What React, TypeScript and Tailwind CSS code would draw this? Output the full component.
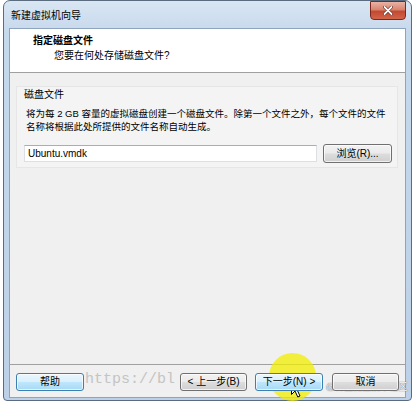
import React from 'react';

const FONT = "font-['Liberation_Sans','Noto_Sans_CJK_SC',sans-serif]";

const grayBtn =
  'border-[#707070] bg-[linear-gradient(#f2f2f2_0%,#ebebeb_48%,#dddddd_52%,#cfcfcf_100%)]';
const blueBtn =
  'border-[#3c7fb1] bg-[linear-gradient(#eaf6fd_0%,#d9f0fc_48%,#bee6fd_52%,#a7d9f5_100%)]';

function WinButton({ label, blue, className }: { label: string; blue?: boolean; className?: string }) {
  return (
    <div
      className={`relative z-10 shrink-0 h-[18px] rounded-[3px] border flex items-center justify-center text-[10px] leading-none text-black shadow-[inset_0_0_0_1px_rgba(255,255,255,0.7)] ${
        blue ? blueBtn : grayBtn
      } ${className ?? ''}`}
    >
      {label}
    </div>
  );
}

export default function App() {
  return (
    <div className={`relative w-[414px] h-[405px] bg-white overflow-hidden ${FONT}`}>
      {/* Window frame */}
      <div className="ml-[3px] w-[409px] h-[401px] rounded-t-[7px] rounded-b-[4px] border border-[#5b6b80] bg-[linear-gradient(180deg,#d9e6f3_0%,#c6d8ec_8%,#bcd0e7_100%)] flex flex-col pl-[5px] pr-[5px] pb-[2px]">
        {/* Title bar */}
        <div className="h-[27px] flex items-start justify-between">
          <span className="pt-[8px] pl-[2px] text-[10px] leading-[13px] text-black">新建虚拟机向导</span>
          <div className="w-[36px] h-[19px] rounded-b-[4px] border border-[#7a2a1c] bg-[linear-gradient(#eab3a4_0%,#d98470_45%,#c24a31_55%,#d2644a_100%)] flex items-center justify-center">
            <svg width="10" height="9" viewBox="0 0 10 9">
              <path d="M1.5 1 L8.5 8 M8.5 1 L1.5 8" stroke="#5a1a10" strokeWidth="3" strokeLinecap="round" />
              <path d="M1.5 1 L8.5 8 M8.5 1 L1.5 8" stroke="#ffffff" strokeWidth="1.8" strokeLinecap="round" />
            </svg>
          </div>
        </div>

        {/* Client area */}
        <div className="flex-1 border border-[#8ea3bd] bg-[#f0f0f0] flex flex-col">
          {/* Header */}
          <div className="h-[44px] bg-white border-b border-[#a0a0a0] pt-[5px] text-[10px] leading-[13px] text-black">
            <div className="pl-[23px] font-bold">指定磁盘文件</div>
            <div className="pl-[44px] mt-[2px]">您要在何处存储磁盘文件?</div>
          </div>

          {/* Group */}
          <div className="mt-[13px] ml-[6px] mr-[7px] border border-[#e6e6e6] bg-[#f4f4f4] pl-[7px] pr-[4px] pt-[1px] pb-[4px] text-[10px] leading-[13px] text-black">
            <div>磁盘文件</div>
            <div className="mt-[6px] ml-[2px] text-[9.5px]">
              <div className="whitespace-nowrap">将为每 2 GB 容量的虚拟磁盘创建一个磁盘文件。除第一个文件之外，每个文件的文件</div>
              <div>名称将根据此处所提供的文件名称自动生成。</div>
            </div>
            <div className="mt-[11px] flex items-center gap-[6px]">
              <div className="shrink-0 w-[293px] h-[17px] bg-white border border-[#dcdfe3] border-t-[#abadb3] pl-[3px] flex items-center text-[10px]">
                Ubuntu.vmdk
              </div>
              <WinButton label="浏览(R)..." className="w-[69px] h-[19px]" />
            </div>
          </div>

          <div className="flex-1" />

          {/* Footer */}
          <div className="relative border-t border-[#a0a0a0] pt-[8px] pb-[6px] px-[6px] flex items-center">
            <div className="absolute left-[75px] top-[5px] text-[15px] leading-[20px] font-['Liberation_Mono',monospace] text-[#c4c4c4] whitespace-nowrap">
              https://bl
            </div>
            <WinButton label="帮助" blue className="w-[68px]" />
            <div className="flex-1" />
            <WinButton label="< 上一步(B)" className="w-[67px]" />
            <WinButton label="下一步(N) >" blue className="w-[68px] ml-[8px]" />
            <WinButton label="取消" className="w-[67px] ml-[9px]" />
          </div>
        </div>
      </div>

      {/* Cursor highlight */}
      <div className="absolute left-[269px] top-[353px] w-[47px] h-[48px] rounded-full bg-[#f2ee00]/75 pointer-events-none" />
      <svg className="absolute left-[291px] top-[379px]" width="12" height="19" viewBox="0 0 12 19">
        <path d="M0.5 0.5 L0.5 15.5 L4 12 L6.8 18 L9 17 L6.3 11.2 L11 11.2 Z" fill="#ffffff" stroke="#000000" strokeWidth="1" strokeLinejoin="round" />
      </svg>

      {/* Watermark */}
      <div className="absolute left-[326px] top-[381px] text-[9px] leading-[12px] text-white [text-shadow:0_0_1px_#666,0_0_1px_#666] whitespace-nowrap">
        @稀土掘金技术社区
      </div>
    </div>
  );
}
